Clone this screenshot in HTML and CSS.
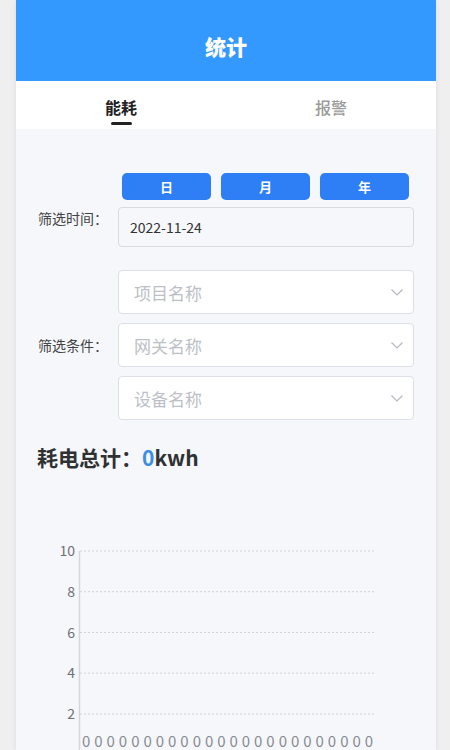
FILE: index.html
```html
<!DOCTYPE html>
<html>
    <head>
        <meta charset="utf-8">
        <title>统计</title>
        <link rel="stylesheet" href="styles.css">
    </head>
    <body>
        <div class="app">
            <div class="top-bar"><h1>统计</h1></div>

            <div class="tabs">
                <div class="tab tab-active">能耗<span class="tab-line"></span></div>
                <div class="tab">报警</div>
            </div>

            <div class="content">
                <div class="form-row row-time">
                    <div class="form-label">筛选时间：</div>
                    <div class="form-fields">
                        <div class="range-buttons">
                            <div class="range-btn">日</div>
                            <div class="range-btn">月</div>
                            <div class="range-btn">年</div>
                        </div>
                        <div class="date-input">2022-11-24</div>
                    </div>
                </div>

                <div class="form-row row-filter">
                    <div class="form-label">筛选条件：</div>
                    <div class="form-fields select-list">
                        <div class="select">
                            <span>项目名称</span>
                            <svg class="chevron" viewBox="0 0 12 7"><path d="M0.5 0.5 L6 6 L11.5 0.5"/></svg>
                        </div>
                        <div class="select">
                            <span>网关名称</span>
                            <svg class="chevron" viewBox="0 0 12 7"><path d="M0.5 0.5 L6 6 L11.5 0.5"/></svg>
                        </div>
                        <div class="select">
                            <span>设备名称</span>
                            <svg class="chevron" viewBox="0 0 12 7"><path d="M0.5 0.5 L6 6 L11.5 0.5"/></svg>
                        </div>
                    </div>
                </div>

                <div class="total">耗电总计：<span class="total-num">0</span>kwh</div>

                <svg class="chart" width="420" height="260" viewBox="0 0 420 260">
                    <g class="grid">
                        <line x1="64" y1="61" x2="359" y2="61"/>
                        <line x1="64" y1="101.7" x2="359" y2="101.7"/>
                        <line x1="64" y1="142.5" x2="359" y2="142.5"/>
                        <line x1="64" y1="183.2" x2="359" y2="183.2"/>
                        <line x1="64" y1="224" x2="359" y2="224"/>
                    </g>
                    <line class="axis" x1="63.5" y1="61" x2="63.5" y2="260"/>
                    <g class="y-labels">
                        <text x="59" y="66">10</text>
                        <text x="59" y="106.7">8</text>
                        <text x="59" y="147.5">6</text>
                        <text x="59" y="188.2">4</text>
                        <text x="59" y="229">2</text>
                        <text x="59" y="270">0</text>
                    </g>
                    <g class="bar-labels" id="bar-labels"></g>
                </svg>
            </div>
        </div>
        <script>
            // one value label per hour, all zero for this day
            var g = document.getElementById('bar-labels');
            var step = 295 / 24;
            for (var i = 0; i < 24; i++) {
                var t = document.createElementNS('http://www.w3.org/2000/svg', 'text');
                t.setAttribute('x', (64 + step / 2 + i * step).toFixed(1));
                t.setAttribute('y', '257');
                t.textContent = '0';
                g.appendChild(t);
            }
        </script>
    </body>
</html>
```

FILE: styles.css
```css
body {
    margin: 0;
    background-color: #efefef;
    font-family: "Noto Sans CJK SC", "Noto Sans", sans-serif;
    height: 750px;
    overflow: hidden;
}
.app {
    width: 420px;
    margin: 0 14px 0 16px;
    background-color: #f5f7fa;
    box-shadow: 0 0 5px rgba(0, 0, 0, 0.08);
    min-height: 750px;
}
.top-bar {
    height: 81px;
    box-sizing: border-box;
    padding-top: 10px;
    background-color: #3399fe;
    display: flex;
    align-items: center;
    justify-content: center;
}
.top-bar h1 {
    margin: 0;
    color: #fff;
    font-size: 21px;
    font-weight: 900;
}
.tabs {
    height: 48px;
    background-color: #fff;
    display: flex;
}
.tab {
    flex: 1;
    padding-top: 15px;
    font-size: 16px;
    line-height: 22px;
    font-weight: 500;
    color: #9a9a9a;
    display: flex;
    flex-direction: column;
    align-items: center;
}
.tab-active {
    color: #222;
    font-weight: bold;
}
.tab-line {
    width: 21px;
    height: 3px;
    margin-top: 4px;
    border-radius: 2px;
    background-color: #222;
}
.content {
    padding: 44px 22px 0 0;
}
.form-row {
    display: flex;
    align-items: center;
}
.form-label {
    width: 102px;
    box-sizing: border-box;
    padding-right: 10px;
    text-align: right;
    font-size: 14px;
    color: #444;
}
.row-time .form-label {
    padding-top: 16px;
}
.form-fields {
    flex: 1;
    display: flex;
    flex-direction: column;
}
.range-buttons {
    display: flex;
    gap: 10px;
    padding: 0 5px 0 4px;
}
.range-btn {
    flex: 1;
    height: 27px;
    line-height: 27px;
    border-radius: 5px;
    background-color: #2e7ef5;
    color: #fff;
    font-size: 13px;
    font-weight: bold;
    text-align: center;
}
.date-input {
    margin-top: 7px;
    height: 40px;
    box-sizing: border-box;
    border: 1px solid #d8dbe1;
    border-radius: 4px;
    padding-left: 11px;
    line-height: 38px;
    font-size: 14px;
    color: #333;
}
.row-filter {
    margin-top: 23px;
}
.select-list {
    gap: 9px;
}
.select {
    height: 44px;
    box-sizing: border-box;
    border: 1px solid #dcdfe6;
    border-radius: 4px;
    background-color: #fff;
    padding: 0 10px 0 15px;
    display: flex;
    align-items: center;
    justify-content: space-between;
    font-size: 17px;
    color: #bcbfc6;
}
.chevron {
    width: 12px;
    height: 7px;
    fill: none;
    stroke: #b4b8bf;
    stroke-width: 1.2;
}
.total {
    margin: 23px 0 0 21px;
    line-height: 28px;
    font-size: 21px;
    font-weight: bold;
    color: #303133;
}
.total-num {
    color: #3a8ee6;
}
.chart {
    display: block;
    margin-top: 19px;
    overflow: visible;
}
.grid line {
    stroke: #cfd2d8;
    stroke-width: 1;
    stroke-dasharray: 2 2;
}
.axis {
    stroke: #d4d6db;
    stroke-width: 1.5;
}
.y-labels text {
    text-anchor: end;
    font-size: 14px;
    fill: #6e7079;
}
.bar-labels text {
    text-anchor: middle;
    font-size: 15px;
    fill: #888b92;
}
```
